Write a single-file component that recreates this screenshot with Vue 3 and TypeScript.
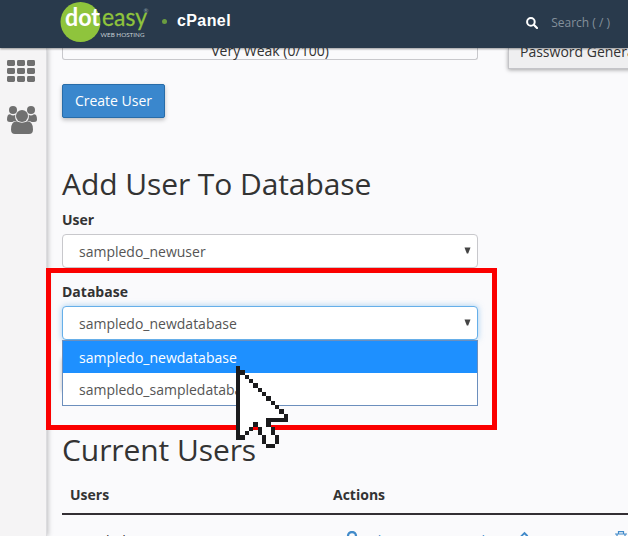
<script setup lang="ts">
import { ref } from 'vue'

const user = ref('sampledo_newuser')
const database = ref('sampledo_newdatabase')
const databases: string[] = ['sampledo_newdatabase', 'sampledo_sampledatabase']
</script>

<template>
  <div class="page">
    <header class="topbar">
      <svg class="logo" width="92" height="44" viewBox="0 0 92 44">
        <circle cx="20.5" cy="20" r="20" fill="#8fc43c" />
        <text class="dot" x="5" y="23.7" textLength="35" lengthAdjust="spacingAndGlyphs">dot</text>
        <text class="easy" x="42" y="23.7" textLength="45" lengthAdjust="spacingAndGlyphs">easy</text>
        <text class="reg" x="83.5" y="11">®</text>
        <text class="tag" x="40.5" y="35" textLength="44" lengthAdjust="spacingAndGlyphs">WEB HOSTING</text>
      </svg>
      <span class="bullet"></span>
      <strong class="product">cPanel</strong>
      <div class="search">
        <svg width="12" height="12" viewBox="0 0 12 12">
          <circle cx="4.9" cy="4.9" r="3.8" fill="none" stroke="#fff" stroke-width="2" />
          <path d="M7.8 7.8 L11 11" stroke="#fff" stroke-width="2.2" stroke-linecap="round" />
        </svg>
        <span>Search ( / )</span>
      </div>
    </header>

    <div class="body">
      <nav class="sidebar">
        <svg class="grid-icon" width="28" height="22" viewBox="0 0 28 22">
          <template v-for="r in 3" :key="r">
            <rect v-for="c in 3" :key="c" :x="(c - 1) * 10" :y="(r - 1) * 8" width="8" height="6" rx="1.4" fill="#707070" />
          </template>
        </svg>
        <svg class="users-icon" width="30" height="28" viewBox="0 0 30 28">
          <g fill="#707070">
            <circle cx="6" cy="4" r="4" />
            <circle cx="24" cy="4" r="4" />
            <path d="M3 8.2 Q6 10.3 8.3 8.7 Q7.6 13 10 15.2 Q7 14.7 5.4 16 H3 Q0 16 0 13.5 Q0 8.3 3 8.2Z" />
            <path d="M27 8.2 Q24 10.3 21.7 8.7 Q22.4 13 20 15.2 Q23 14.7 24.6 16 H27 Q30 16 30 13.5 Q30 8.3 27 8.2Z" />
            <circle cx="15" cy="10" r="6" />
            <path d="M9.6 15.3 Q15 18.2 20.4 15.3 Q26 15.5 26 23.5 Q26 28 22 28 H8 Q4 28 4 23.5 Q4 15.5 9.6 15.3Z" />
          </g>
        </svg>
      </nav>

      <main class="content">
        <div class="top-row">
          <div class="strength"><span>Very Weak (0/100)</span></div>
          <div class="generator"><span>Password Generator</span></div>
        </div>
        <button class="primary" type="button">Create User</button>

        <h2 class="add-title">Add User To Database</h2>
        <label class="label">User</label>
        <div class="select">
          <span>{{ user }}</span>
          <svg width="7" height="7" viewBox="0 0 7 7"><path d="M.5 .5H6.5L4.2 6.5H2.8Z" fill="#444" /></svg>
        </div>

        <label class="label second">Database</label>
        <div class="select focused">
          <span>{{ database }}</span>
          <svg width="7" height="7" viewBox="0 0 7 7"><path d="M.5 .5H6.5L4.2 6.5H2.8Z" fill="#444" /></svg>
          <ul class="options">
            <li v-for="name in databases" :key="name" :class="{ active: name === database }">{{ name }}</li>
          </ul>
        </div>
        <div class="add"></div>

        <h2 class="current-title">Current Users</h2>
        <div class="table">
          <div class="thead"><span>Users</span><span>Actions</span></div>
          <div class="trow">
            <span>sampledo</span>
            <div class="actions">
              <a class="change">
                <svg width="12" height="14" viewBox="0 0 12 14"><circle cx="6" cy="5" r="4" fill="none" stroke="#428bca" stroke-width="2.3" /><path d="M6 9V14" stroke="#428bca" stroke-width="2" /></svg>
                Change Password
              </a>
              <a class="rename">
                <svg width="12" height="14" viewBox="0 0 12 14"><path d="M.5 10.5L1.5 7L6.5 2L9 4.5L4 9.5Z" fill="none" stroke="#428bca" stroke-width="1.8" /></svg>
                Rename
              </a>
              <a class="delete">
                <svg width="12" height="14" viewBox="0 0 12 14"><path d="M0 3H12M3.5 3V.7H8.5V3M2 3V13H10V3" fill="none" stroke="#428bca" stroke-width="1.2" /></svg>
                Delete
              </a>
            </div>
          </div>
        </div>
      </main>
    </div>

    <div class="highlight"></div>
    <svg class="cursor" width="52" height="82.4" viewBox="0 0 12 19" shape-rendering="crispEdges">
      <path d="M0 0H1V1H2V2H3V3H4V4H5V5H6V6H7V7H8V8H9V9H10V10H11V11H12V13H8V14H9V16H10V18H9V19H7V18H6V16H5V14H4V15H3V16H2V17H0Z" fill="#1b1b1d" />
      <path d="M1 2H2V3H3V4H4V5H5V6H6V7H7V8H8V9H9V10H10V11H11V12H7V14H8V16H9V18H7V16H6V14H5V13H4V14H3V15H2V16H1Z" fill="#fff" />
    </svg>
  </div>
</template>

<style>
body { margin: 0; overflow: hidden; }
</style>

<style scoped>
.page {
  position: relative;
  width: 628px;
  height: 536px;
  overflow: hidden;
  display: flex;
  flex-direction: column;
  background: #fafafc;
  color: #333;
  font: 14px/20px "Open Sans", sans-serif;
}
.topbar {
  box-sizing: border-box;
  position: relative;
  z-index: 2;
  flex: 0 0 48px;
  min-height: 0;
  display: flex;
  align-items: flex-start;
  padding: 2px 18px 0 60px;
  background: #293a4c;
  box-shadow: 0 1px 2px rgba(0, 0, 0, .4);
}
.logo text { font-family: Lato, sans-serif; }
.logo .dot { font-size: 24px; font-weight: 700; fill: #fff; }
.logo .easy { font-size: 25px; fill: #8fc43c; stroke: #8fc43c; stroke-width: .3px; }
.logo .reg { font-size: 6px; fill: #8fa0a8; }
.logo .tag { font-size: 6px; fill: #c5cdd3; }
.bullet { width: 5px; height: 5px; margin: 17px 0 0 10px; border-radius: 50%; background: #6a9c40; }
.product { margin: 9px 0 0 10px; font: bold 16px/20px "Liberation Sans", sans-serif; letter-spacing: .4px; color: #fff; }
.search { display: flex; align-items: center; gap: 13px; margin: 11px 0 0 auto; color: #84909b; font-size: 12px; }
.body { flex: 1; min-height: 0; display: flex; }
.sidebar {
  box-sizing: border-box;
  flex: 0 0 47px;
  padding: 12px 0 0 7px;
  background: #f5f4f5;
  border-right: 1px solid #dcdcdf;
  box-shadow: 1px 0 5px rgba(0, 0, 0, .25);
}
.sidebar svg { display: block; }
.users-icon { margin-top: 24px; }
.content { flex: 1; min-width: 0; padding-left: 15px; overflow: hidden; }
.top-row { display: flex; align-items: flex-start; gap: 30px; height: 36px; }
.strength {
  box-sizing: border-box;
  flex: 0 0 416px;
  height: 12px;
  display: flex;
  align-items: flex-end;
  justify-content: center;
  border: 1px solid #c8c8cc;
  border-top: 0;
  border-radius: 0 0 3px 3px;
  line-height: 16px;
}
.generator {
  box-sizing: border-box;
  flex: 0 0 130px;
  height: 21px;
  display: flex;
  align-items: flex-end;
  padding: 0 0 6px 11px;
  background: #efeff0;
  border: 1px solid #c4c4c8;
  border-top: 0;
  box-shadow: 0 1px 4px rgba(0, 0, 0, .35);
  white-space: nowrap;
}
.primary {
  display: block;
  box-sizing: border-box;
  width: 103px;
  height: 34px;
  padding: 0;
  border: 1px solid #286ca8;
  border-radius: 2px;
  background: #3a87cd;
  box-shadow: 0 2px 4px rgba(0, 0, 0, .25);
  color: #fff;
  font: 14px/20px "Open Sans", sans-serif;
}
h2 { margin: 0; font-size: 30px; line-height: 40px; font-weight: 400; letter-spacing: -.08px; }
.add-title { margin-top: 46px; }
.label { display: block; margin-top: 6px; line-height: 20px; font-weight: 700; }
.label.second { margin-top: 14px; }
.select {
  position: relative;
  box-sizing: border-box;
  width: 416px;
  height: 34px;
  margin-top: 4px;
  padding: 0 6px 0 16px;
  display: flex;
  align-items: center;
  justify-content: space-between;
  border: 1px solid #c8c8cc;
  border-radius: 4px;
  background: #fff;
  color: #555;
}
.select > span { padding-top: 2px; }
.select > svg { margin-bottom: 1px; }
.select.focused { border-color: #66afe9; box-shadow: 0 0 6px rgba(102, 175, 233, .6); }
.options {
  position: absolute;
  box-sizing: border-box;
  z-index: 1;
  top: 33px;
  left: -1px;
  width: 416px;
  margin: 0;
  padding: 0;
  list-style: none;
  border: 1px solid #6c8fbd;
  background: #fff;
}
.options li { box-sizing: border-box; height: 32px; padding: 1px 0 0 16px; line-height: 32px; }
.options .active { background: #1e90ff; color: #fff; }
.add { width: 60px; height: 34px; margin-top: 16px; border-radius: 2px; background: #3a87cd; box-shadow: 0 2px 4px rgba(0, 0, 0, .25); }
.current-title { margin-top: 40px; }
.thead { display: flex; padding: 15px 8px 8px; border-bottom: 2px solid #332f34; font-weight: 700; line-height: 20px; }
.thead span:first-child, .trow > span { flex: 0 0 263px; }
.trow { display: flex; padding: 16px 8px 8px; white-space: nowrap; }
.actions { display: flex; padding-left: 13px; color: #428bca; }
.actions a { display: flex; gap: 11px; }
.change { width: 172px; }
.rename { width: 97px; }
.actions .rename { gap: 2px; }
.actions svg { flex: none; }
.highlight {
  position: absolute;
  z-index: 3;
  box-sizing: border-box;
  left: 46px;
  top: 268px;
  width: 451px;
  height: 162px;
  border: 5px solid #fb0000;
}
.cursor { position: absolute; z-index: 4; left: 236px; top: 366px; }
</style>
